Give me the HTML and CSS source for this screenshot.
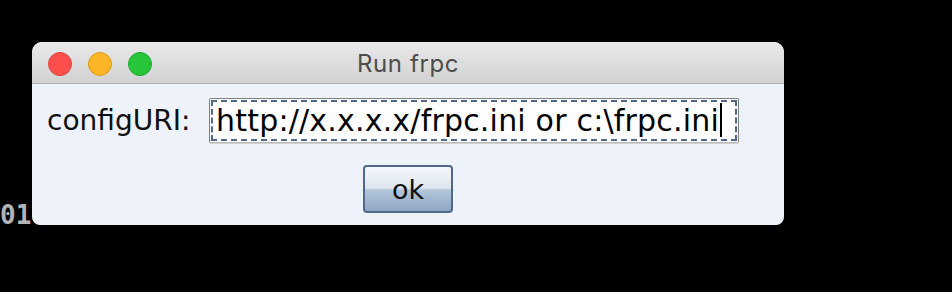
FILE: index.html
```html
<!DOCTYPE html>
<html lang="en">
<head>
  <meta charset="UTF-8" />
  <title>Run frpc</title>
  <link rel="stylesheet" href="styles.css">
</head>
<body>
  <div class="desktop">
    <div class="terminal">01</div>

    <div class="window">
      <div class="titlebar">
        <div class="lights">
          <span class="light red"></span>
          <span class="light yellow"></span>
          <span class="light green"></span>
        </div>
        <div class="title">Run frpc</div>
      </div>
      <div class="content">
        <div class="row">
          <label class="label" for="config">configURI:</label>
          <div class="field">
            <div class="field-inner" id="config">http://x.x.x.x/frpc.ini or c:\frpc.ini<span class="caret"></span></div>
          </div>
        </div>
        <div class="actions">
          <button class="ok">ok</button>
        </div>
      </div>
    </div>
  </div>
</body>
</html>
```

FILE: styles.css
```css
body {
  margin: 0;
  background-color: #000;
}

.desktop {
  position: relative;
  width: 952px;
  height: 292px;
  overflow: hidden;
}

.terminal {
  padding-top: 201px;
  font-family: 'DejaVu Sans Mono', monospace;
  font-weight: bold;
  font-size: 26px;
  line-height: 28px;
  color: #b4b4b4;
  white-space: pre;
}

.window {
  position: absolute;
  left: 32px;
  top: 42px;
  width: 752px;
  height: 183px;
  border-radius: 10px 10px 8px 8px;
  overflow: hidden;
  background-color: #eef2fa;
}

.titlebar {
  position: relative;
  height: 41px;
  background: linear-gradient(#e9e9e9, #d2d2d2);
  border-bottom: 1px solid #b1b1b1;
  display: flex;
  align-items: center;
  justify-content: center;
}

.lights {
  position: absolute;
  left: 16px;
  top: 10px;
  display: flex;
  gap: 16px;
}

.light {
  width: 22px;
  height: 22px;
  border-radius: 50%;
  border: 1px solid;
}

.red { background-color: #fe4f4c; border-color: #e1403c; }
.yellow { background-color: #ffb528; border-color: #dd9b18; }
.green { background-color: #27c63a; border-color: #1aa82a; }

.title {
  font-family: Inter, 'Liberation Sans', sans-serif;
  font-size: 24px;
  letter-spacing: 0.6px;
  color: #4d4d4d;
  padding-top: 2px;
}

.content {
  padding-top: 14px;
}

.row {
  display: flex;
  align-items: center;
  padding: 0 45px 0 15px;
}

.label {
  width: 162px;
  font-family: 'DejaVu Sans', sans-serif;
  font-size: 28px;
  color: #111;
}

.field {
  width: 526px;
  height: 41px;
  padding: 1px;
  border: 1px solid #7d7d7d;
  border-bottom-color: #b9b9b9;
  border-radius: 2px;
  background-color: #fff;
  box-shadow: 0 1px 0 #d0d0d0;
}

.field-inner {
  height: 37px;
  border: 2px dashed #52698a;
  padding-left: 3px;
  font-family: 'DejaVu Sans', sans-serif;
  font-size: 30px;
  letter-spacing: 0.2px;
  line-height: 38px;
  color: #000;
  white-space: nowrap;
  overflow: hidden;
}

.caret {
  display: inline-block;
  width: 2px;
  height: 34px;
  margin-left: 1px;
  vertical-align: -6px;
  background-color: #000;
}

.actions {
  display: flex;
  justify-content: center;
  margin-top: 22px;
}

.ok {
  width: 90px;
  height: 48px;
  padding: 0;
  border: 2px solid #50698a;
  border-radius: 4px;
  background: linear-gradient(#f4f7fb 0%, #dfe6ef 48%, #b3c6da 52%, #8ea7c3 100%);
  font-family: 'DejaVu Sans', sans-serif;
  font-size: 27px;
  color: #111;
}
```
